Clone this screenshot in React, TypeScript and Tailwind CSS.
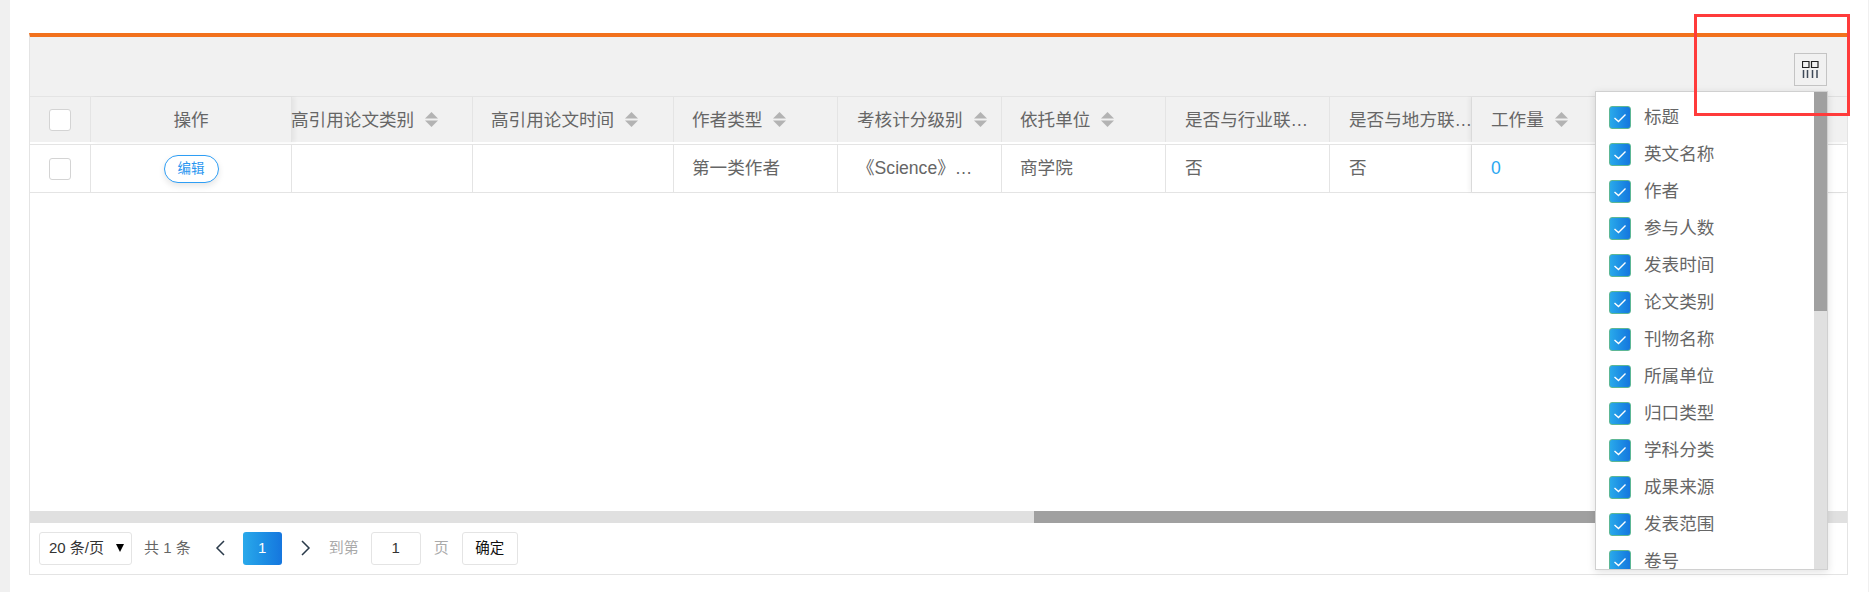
import React from "react";

const FONT = "[font-family:'Liberation_Sans','Noto_Sans_CJK_SC',sans-serif]";

function Sort() {
  return (
    <svg width="13" height="15" viewBox="0 0 13 15" className="ml-[11px] shrink-0">
      <path d="M6.500 0L13 6.500H0Z" fill="#b3b3b3" />
      <path d="M0 8.500H13L6.500 15Z" fill="#b3b3b3" />
    </svg>
  );
}

function Box() {
  return <div className="w-[22px] h-[22px] rounded-[3px] border border-[#d4d4d4] bg-white" />;
}

function Checked() {
  return (
    <div className="w-[22px] h-[23px] shrink-0 rounded-[3px] border border-[#5db795] bg-gradient-to-r from-[#2aa9ea] to-[#1676de] flex items-center justify-center">
      <svg width="14" height="10" viewBox="0 0 14 10">
        <path d="M1.500 5L5.500 8.500L12.500 1.500" fill="none" stroke="#fff" strokeWidth="1.4" />
      </svg>
    </div>
  );
}

const cols = [
  { t: "高引用论文类别", w: "w-[181px] pl-0", v: "", sort: true, tx: "-ml-[1px]" },
  { t: "高引用论文时间", w: "w-[201px] pl-[18px]", v: "", sort: true, tx: "" },
  { t: "作者类型", w: "w-[164px] pl-[18px]", v: "第一类作者", sort: true, tx: "" },
  { t: "考核计分级别", w: "w-[164px] pl-[19px]", v: "《Science》…", sort: true, tx: "" },
  { t: "依托单位", w: "w-[164px] pl-[18px]", v: "商学院", sort: true, tx: "" },
  { t: "是否与行业联…", w: "w-[164px] pl-[19px]", v: "否", sort: false, tx: "" },
  { t: "是否与地方联…", w: "w-[142px] pl-[19px]", v: "否", sort: false, tx: "" },
];

const items = ["标题", "英文名称", "作者", "参与人数", "发表时间", "论文类别", "刊物名称", "所属单位", "归口类型", "学科分类", "成果来源", "发表范围", "卷号"];

export default function App() {
  return (
    <div className={`relative w-[1869px] h-[592px] bg-white flex overflow-hidden text-[#666] ${FONT}`}>
      <div className="w-[10px] bg-[#f0f0f0]" />
      <div className="flex-1 pl-[19px] pr-[20px] pt-[33px] pb-[17px] flex">
        <div className="flex-1 flex flex-col border-x border-b border-[#e4e4e4] border-t-[4px] border-t-[#f2711c]">
          <div className="h-[59px] bg-[#f1f1f1] flex justify-end items-start pt-[16px] pr-[20px] relative">
            <div className="relative w-[33px] h-[33px] border border-[#c4c4c4] flex items-center justify-center">
              <svg width="17" height="17" viewBox="0 0 17 17">
                <path d="M.5.5h6.500v6H.5zM9.500.5H16v6H9.500z" fill="none" stroke="#222" strokeWidth="1.2" />
                <path d="M1.500 9v8M5.500 9v8M10.500 9v8M15 9v8" stroke="#3f4a58" strokeWidth="1.5" />
              </svg>
              <div className="absolute left-[-200px] top-[37px] w-[233px] h-[479px] z-20 bg-white border border-[#d0d0d0] shadow-[0_2px_8px_rgba(0,0,0,0.12)] flex overflow-hidden">
                <div className="flex-1 pt-[7px] pl-[13px]">
                  {items.map((s) => (
                    <div key={s} className="h-[37px] flex items-center gap-[13px] text-[17.6px] whitespace-nowrap">
                      <Checked />
                      <span>{s}</span>
                    </div>
                  ))}
                </div>
                <div className="w-[13px] bg-[#e0e0e0]">
                  <div className="h-[219px] bg-[#a0a0a0]" />
                </div>
              </div>
            </div>
          </div>

          <div className="flex flex-col flex-1">
            <div className="flex-1 flex flex-col">
              <div className="flex h-[48px] border-t border-b-2 border-t-[#e4e4e4] border-b-white bg-[#f1f1f1] text-[17.6px]">
                <div className="w-[61px] border-r border-[#e4e4e4] flex items-center justify-center pr-[1px]"><Box /></div>
                <div className="w-[201px] border-r border-[#e4e4e4] flex items-center justify-center pt-[2px] shadow-[3px_0_4px_rgba(0,0,0,0.05)]">操作</div>
                {cols.map((c) => (
                  <div key={c.t} className={`${c.w} border-r border-[#e4e4e4] flex items-center whitespace-nowrap`}>
                    <span className={`pt-[2px] ${c.tx}`}>{c.t}</span>
                    {c.sort && <Sort />}
                  </div>
                ))}
                <div className="flex-1 flex items-center pl-[19px] shadow-[-3px_0_4px_rgba(0,0,0,0.05)]"><span className="pt-[2px]">工作量</span><Sort /></div>
              </div>
              <div className="flex h-[49px] border-y border-[#e4e4e4] text-[17.6px]">
                <div className="w-[61px] border-r border-[#e4e4e4] flex items-center justify-center pr-[1px]"><Box /></div>
                <div className="w-[201px] border-r border-[#e4e4e4] flex items-center justify-center">
                  <button className="w-[55px] h-[28px] mt-[1px] rounded-full border border-[#2e9ef5] bg-white text-[#2a96f0] text-[13.5px] shadow-[0_3px_6px_rgba(0,0,0,0.1)]">编辑</button>
                </div>
                {cols.map((c) => (
                  <div key={c.t} className={`${c.w} border-r border-[#e4e4e4] flex items-center whitespace-nowrap`}>{c.v}</div>
                ))}
                <div className="flex-1 flex items-center pl-[19px] text-[#2aa7f0] shadow-[-3px_0_4px_rgba(0,0,0,0.05)]">0</div>
              </div>
            </div>

            <div className="h-[12px] bg-[#e0e0e0] pl-[1004px]">
              <div className="h-full w-[680px] bg-[#a0a0a0]" />
            </div>

            <div className="h-[51px] pl-[9px] pt-[9px] flex items-start text-[15px]">
              <div className="w-[93px] h-[33px] border border-[#e4e4e4] rounded-[3px] flex items-center pl-[9px] text-[#333] relative whitespace-nowrap">
                20 条/页
                <span className="absolute left-[76px] top-[11px] w-0 h-0 border-x-[4px] border-x-transparent border-t-[8px] border-t-black" />
              </div>
              <span className="ml-[12px] h-[33px] flex items-center whitespace-nowrap">共 1 条</span>
              <svg width="10" height="16" viewBox="0 0 10 16" className="ml-[24px] mt-[8px]"><path d="M9 1L2 8L9 15" fill="none" stroke="#2a3a4a" strokeWidth="1.5" /></svg>
              <div className="ml-[18px] w-[39px] h-[33px] rounded-[3px] bg-gradient-to-r from-[#2aa9ea] to-[#1676de] text-white flex items-center justify-center">1</div>
              <svg width="10" height="16" viewBox="0 0 10 16" className="ml-[19px] mt-[8px]"><path d="M1 1L8 8L1 15" fill="none" stroke="#2a3a4a" strokeWidth="1.5" /></svg>
              <span className="ml-[18px] h-[33px] flex items-center text-[#aaa] whitespace-nowrap">到第</span>
              <div className="ml-[12px] w-[50px] h-[33px] border border-[#e4e4e4] rounded-[3px] flex items-center justify-center text-[#333]">1</div>
              <span className="ml-[13px] h-[33px] flex items-center text-[#aaa]">页</span>
              <div className="ml-[13px] w-[56px] h-[33px] border border-[#e4e4e4] rounded-[3px] flex items-center justify-center text-[#111] text-[14.5px]">确定</div>
            </div>
          </div>
        </div>
      </div>
      <div className="w-[1px] bg-[#f0f0f0]" />
      <div className="absolute left-[1694px] top-[14px] w-[156px] h-[102px] border-[3px] border-[#ff3b3b] z-30 pointer-events-none" />
    </div>
  );
}
